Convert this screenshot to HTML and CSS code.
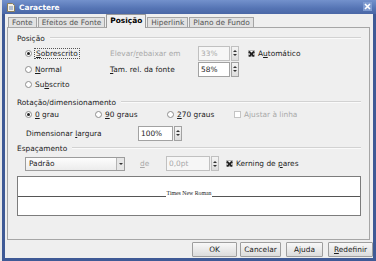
FILE: index.html
```html
<!DOCTYPE html>
<html lang="pt">
<head>
    <meta charset="UTF-8">
    <title>Caractere</title>
    <link rel="stylesheet" href="styles.css">
</head>
<body>
    <div class="window">
        <!-- Title bar -->
        <div class="titlebar">
            <svg class="app-icon" width="8" height="9" viewBox="0 0 8 9">
                <path d="M0.5 0.5h5l2 2v6h-7z" fill="#f4f1e6" stroke="#8a7d5a" stroke-width="1"/>
                <path d="M2 4h4M2 6h4" stroke="#6b86b8" stroke-width="1"/>
            </svg>
            <span class="title">Caractere</span>
            <svg class="close" width="9" height="9" viewBox="0 0 9 9">
                <rect x="0" y="0" width="9" height="9" fill="#7f9bd0"/>
                <path d="M2 2l5 5M7 2l-5 5" stroke="#fff" stroke-width="1.6"/>
            </svg>
        </div>

        <!-- Tabs -->
        <div class="tabs">
            <div class="tab">Fonte</div>
            <div class="tab">Efeitos de Fonte</div>
            <div class="tab active">Posição</div>
            <div class="tab">Hiperlink</div>
            <div class="tab">Plano de Fundo</div>
        </div>

        <div class="panel">
            <!-- Posição -->
            <div class="group-head">Posição</div>
            <div class="pos-grid">
                <label class="option"><span class="radio checked"></span><span class="focus"><u>S</u>obrescrito</span></label>
                <span class="disabled">Elevar/<u>r</u>ebaixar em</span>
                <div class="spin small disabled">
                    <div class="spin-field">33%</div>
                    <div class="spin-btn"><i class="up"></i><i class="down"></i></div>
                </div>
                <label class="option"><span class="check checked"></span><span>A<u>u</u>tomático</span></label>

                <label class="option"><span class="radio"></span><span><u>N</u>ormal</span></label>
                <span><u>T</u>am. rel. da fonte</span>
                <div class="spin small">
                    <div class="spin-field">58%</div>
                    <div class="spin-btn"><i class="up"></i><i class="down"></i></div>
                </div>
                <span></span>

                <label class="option"><span class="radio"></span><span>Su<u>b</u>scrito</span></label>
            </div>

            <!-- Rotação -->
            <div class="group-head">Rotação/dimensionamento</div>
            <div class="rot-row">
                <label class="option"><span class="radio checked"></span><span><u>0</u> grau</span></label>
                <label class="option"><span class="radio"></span><span><u>9</u>0 graus</span></label>
                <label class="option"><span class="radio"></span><span><u>2</u>70 graus</span></label>
                <label class="option disabled"><span class="check"></span><span>Ajustar à linha</span></label>
            </div>
            <div class="dim-row">
                <span class="dim-label">Dimensionar <u>l</u>argura</span>
                <div class="spin wide">
                    <div class="spin-field">100%</div>
                    <div class="spin-btn"><i class="up"></i><i class="down"></i></div>
                </div>
            </div>

            <!-- Espaçamento -->
            <div class="group-head">Espaçamento</div>
            <div class="space-row">
                <div class="select">
                    <span class="select-text">Padrão</span>
                    <span class="select-btn"><i class="down"></i></span>
                </div>
                <span class="de disabled"><u>d</u>e</span>
                <div class="spin pt disabled">
                    <div class="spin-field">0,0pt</div>
                    <div class="spin-btn"><i class="up"></i><i class="down"></i></div>
                </div>
                <label class="option kerning"><span class="check checked"></span><span>Kerning de <u>p</u>ares</span></label>
            </div>

            <!-- Preview -->
            <div class="preview">
                <div class="baseline">
                    <span class="line"></span>
                    <span class="sample">Times New Roman</span>
                    <span class="line"></span>
                </div>
            </div>
        </div>

        <!-- Buttons -->
        <div class="buttons">
            <button class="btn ok">OK</button>
            <button class="btn cancel">Cancelar</button>
            <button class="btn help">A<u>j</u>uda</button>
            <button class="btn reset"><u>R</u>edefinir</button>
        </div>
    </div>
</body>
</html>
```

FILE: styles.css
```css
* {
    margin: 0;
    padding: 0;
    box-sizing: border-box;
}

body {
    width: 376px;
    height: 261px;
    overflow: hidden;
    background: #e9e9e9;
    font-family: 'DejaVu Sans', sans-serif;
    font-size: 7.4px;
    color: #1c1c1c;
}

u {
    text-decoration: underline;
    text-underline-offset: 1px;
}

/* Window */
.window {
    margin-left: 2px;
    width: 374px;
    height: 261px;
    background: #efefef;
    border: 3px solid #3f5a96;
    border-top: none;
    display: flex;
    flex-direction: column;
}

.titlebar {
    height: 14px;
    margin: 0 -3px;
    padding: 0 3px 0 5px;
    background: linear-gradient(to bottom, #7391cc, #5574b4 60%, #4a67a6);
    display: flex;
    align-items: center;
    gap: 4px;
}

.title {
    color: #fff;
    font-weight: bold;
    flex: 1;
}

.close {
    margin-right: 1px;
    margin-top: -2px;
}

/* Tabs */
.tabs {
    height: 13px;
    display: flex;
    align-items: flex-end;
    padding-left: 3px;
    position: relative;
    z-index: 1;
}

.tab {
    height: 10px;
    padding: 0 3px;
    line-height: 9px;
    border: 1px solid #a4a4a4;
    border-bottom: none;
    background: #e2e2e2;
    color: #555;
    margin-right: 1px;
}

.tab.active {
    height: 14px;
    margin-bottom: -1px;
    line-height: 12px;
    background: #efefef;
    color: #000;
    font-weight: bold;
    border-color: #9a9a9a;
}

/* Panel */
.panel {
    height: 213px;
    margin: 0 3px 0 2px;
    border: 1px solid #a6a6a6;
    padding: 4px 8px 0 9px;
    display: flex;
    flex-direction: column;
}

.group-head {
    height: 12px;
    display: flex;
    align-items: center;
    color: #222;
}

.group-head::after {
    content: '';
    flex: 1;
    margin-left: 5px;
    border-top: 1px solid #d2d2d2;
    border-bottom: 1px solid #fafafa;
}

.disabled {
    color: #a9a9a9;
}

.option {
    display: flex;
    align-items: center;
    gap: 3px;
    white-space: nowrap;
}

.focus {
    outline: 1px dotted #555;
    padding: 0 1px;
}

.radio {
    width: 7px;
    height: 7px;
    border-radius: 50%;
    border: 1px solid #8e8e8e;
    background: #fff;
    display: flex;
    align-items: center;
    justify-content: center;
}

.radio.checked::after {
    content: '';
    width: 3px;
    height: 3px;
    border-radius: 50%;
    background: #222;
}

.check {
    width: 7px;
    height: 7px;
    border: 1px solid #9a9a9a;
    background: #fff;
    position: relative;
}

.check.checked {
    border-color: #bbb;
    background: #fff;
}

.check.checked::before,
.check.checked::after {
    content: '';
    position: absolute;
    left: -1px;
    top: 2px;
    width: 7px;
    height: 1.6px;
    background: #222;
    transform: rotate(45deg);
}

.check.checked::after {
    transform: rotate(-45deg);
}

.disabled .check {
    border-color: #c4c4c4;
}

/* Spin boxes */
.spin {
    height: 15px;
    display: flex;
    gap: 1px;
}

.spin-field {
    flex: 1;
    border: 1px solid #a2a2a2;
    background: #fff;
    padding-left: 2px;
    line-height: 13px;
}

.spin.disabled .spin-field {
    background: #f6f6f6;
    border-color: #c0c0c0;
}

.spin-btn {
    width: 8px;
    border: 1px solid #a2a2a2;
    background: linear-gradient(to bottom, #f4f4f4, #dedede);
    display: flex;
    flex-direction: column;
    align-items: center;
    justify-content: center;
    gap: 2px;
}

.spin.disabled .spin-btn {
    border-color: #c0c0c0;
}

.up {
    width: 0;
    height: 0;
    border-left: 2px solid transparent;
    border-right: 2px solid transparent;
    border-bottom: 2px solid #333;
}

.down {
    width: 0;
    height: 0;
    border-left: 2px solid transparent;
    border-right: 2px solid transparent;
    border-top: 2px solid #333;
}

.spin.small {
    width: 41px;
}

.spin.wide {
    width: 44px;
}

.spin.pt {
    width: 53px;
}

/* Posição grid */
.pos-grid {
    margin-top: 1px;
    padding-left: 8px;
    display: grid;
    grid-template-columns: 85px 88px 50px auto;
    grid-template-rows: 16px 16px 14px;
    align-items: center;
}

/* Rotação */
.rot-row {
    height: 13px;
    padding-left: 8px;
    display: grid;
    grid-template-columns: 70px 72px 67px auto;
    align-items: center;
}

.dim-row {
    margin-top: 5px;
    height: 14px;
    padding-left: 9px;
    display: flex;
    align-items: center;
}

.dim-label {
    width: 112px;
}

/* Espaçamento */
.group-head + .space-row {
    margin-top: 2px;
}

.rot-row + .dim-row + .group-head {
    margin-top: 2px;
}

.pos-grid + .group-head {
    margin-top: 5px;
}

.space-row {
    height: 15px;
    padding-left: 8px;
    display: flex;
    align-items: center;
}

.select {
    width: 100px;
    height: 14px;
    border: 1px solid #9c9c9c;
    background: linear-gradient(to bottom, #fdfdfd, #ececec);
    display: flex;
}

.select-text {
    flex: 1;
    padding-left: 3px;
    line-height: 12px;
}

.select-btn {
    width: 8px;
    border-left: 1px solid #b4b4b4;
    background: #e6e6e6;
    display: flex;
    align-items: center;
    justify-content: center;
}

.de {
    width: 41px;
    padding-left: 15px;
}

.kerning {
    margin-left: 7px;
}

/* Preview */
.preview {
    margin-top: 5px;
    height: 40px;
    border: 1px solid #7c7c7c;
    background: #fff;
    padding-top: 14px;
}

.baseline {
    height: 6px;
    display: flex;
    align-items: flex-end;
}

.line {
    flex: 1;
    height: 1px;
    background: #555;
}

.sample {
    font-family: 'Liberation Serif', serif;
    font-size: 5.8px;
    line-height: 5px;
    margin: 0 1px 1px;
    color: #222;
}

/* Buttons */
.buttons {
    margin-top: 2px;
    display: flex;
    justify-content: flex-end;
    gap: 4px;
}

.btn {
    height: 15px;
    font-family: 'DejaVu Sans', sans-serif;
    font-size: 7.4px;
    color: #1c1c1c;
    border: 1px solid #9e9e9e;
    border-radius: 1px;
    background: linear-gradient(to bottom, #f8f8f8, #dcdcdc);
}

.btn.ok {
    width: 45px;
    margin-right: -1px;
}

.btn.cancel {
    width: 41px;
    margin-right: 1px;
}

.btn.help {
    width: 37px;
    margin-right: 1px;
}

.btn.reset {
    width: 45px;
}
```
